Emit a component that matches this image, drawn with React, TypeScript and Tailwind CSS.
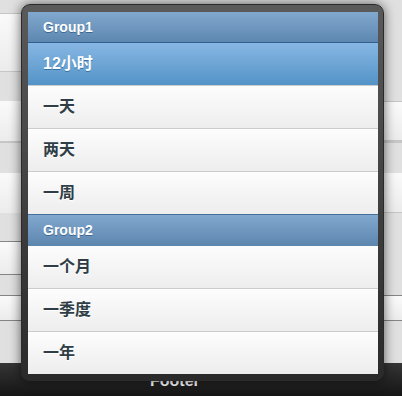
import React from 'react';

type Band = { h: number; kind: 'gray' | 'white' | 'line' | 'dark' };

// page behind the popup (only the edges show)
const leftBands: Band[] = [
  { h: 13, kind: 'gray' },
  { h: 1, kind: 'line' },
  { h: 57, kind: 'white' },
  { h: 1, kind: 'line' },
  { h: 29, kind: 'gray' },
  { h: 40, kind: 'white' },
  { h: 2, kind: 'line' },
  { h: 30, kind: 'gray' },
  { h: 40, kind: 'white' },
  { h: 28, kind: 'gray' },
  { h: 1, kind: 'dark' },
  { h: 32, kind: 'white' },
  { h: 1, kind: 'dark' },
  { h: 20, kind: 'gray' },
  { h: 1, kind: 'dark' },
  { h: 24, kind: 'white' },
  { h: 1, kind: 'dark' },
  { h: 42, kind: 'gray' },
];

const rightBands: Band[] = [
  { h: 101, kind: 'gray' },
  { h: 1, kind: 'line' },
  { h: 38, kind: 'white' },
  { h: 3, kind: 'line' },
  { h: 30, kind: 'gray' },
  { h: 39, kind: 'white' },
  { h: 1, kind: 'line' },
  { h: 82, kind: 'gray' },
  { h: 1, kind: 'dark' },
  { h: 24, kind: 'white' },
  { h: 1, kind: 'dark' },
  { h: 42, kind: 'gray' },
];

const bandClass = {
  gray: 'bg-[#e0e0e0]',
  white: 'bg-gradient-to-b from-[#fafafa] to-[#ececec]',
  line: 'bg-[#c6c6c6]',
  dark: 'bg-[#858585]',
};

const Column: React.FC<{ bands: Band[] }> = ({ bands }) => (
  <div className="flex flex-col">
    {bands.map((b, i) => (
      <div key={i} className={bandClass[b.kind]} style={{ height: b.h }} />
    ))}
  </div>
);

const groups = [
  { title: 'Group1', items: ['12小时', '一天', '两天', '一周'] },
  { title: 'Group2', items: ['一个月', '一季度', '一年'] },
];

const Divider: React.FC<{ label: string; first?: boolean }> = ({ label, first }) => (
  <li
    className={`flex items-center h-[30px] box-content pl-[15px] bg-gradient-to-b from-[#81a8ce] to-[#5e87b0] text-white text-[14px] font-bold [text-shadow:0_1px_0_#3e6790] ${
      first ? '' : 'border-t border-[#456f9a]'
    }`}
  >
    {label}
  </li>
);

const Item: React.FC<{ label: string; active?: boolean; afterDivider?: boolean }> = ({
  label,
  active,
  afterDivider,
}) => (
  <li
    className={`flex items-center h-[42px] box-content pl-[15px] border-t text-[16px] font-bold ${
      active
        ? 'bg-gradient-to-b from-[#87b7e3] to-[#5393c7] border-[#2f5f8c] text-white [text-shadow:0_1px_0_#3373a5]'
        : `bg-gradient-to-b from-[#fdfdfd] to-[#ededed] text-[#2f3e46] [text-shadow:0_1px_0_#fff] ${
            afterDivider ? 'border-[#5e87b0]' : 'border-[#cccccc]'
          }`
    }`}
  >
    {label}
  </li>
);

export default function App() {
  return (
    <div className="relative w-full h-[396px] overflow-hidden bg-[#e0e0e0] font-['Liberation_Sans','Noto_Sans_CJK_SC',sans-serif]">
      <div className="grid grid-cols-2">
        <Column bands={leftBands} />
        <Column bands={rightBands} />
      </div>
      <footer className="h-[33px] pt-[8px] pl-[150px] bg-gradient-to-b from-[#363636] to-[#151515] text-white text-[16px] font-bold leading-[20px] [text-shadow:0_-1px_0_#000]">
        Footer
      </footer>

      {/* select menu popup */}
      <div className="absolute left-[21px] top-[4px] w-[363px] rounded-[9px] border border-[#2a2a2a] bg-gradient-to-b from-[#5a5a5a] to-[#2a2a2a] pt-[7px] pl-[6px] pr-[5px] pb-[6px] shadow-[0_0_12px_rgba(0,0,0,0.6)]">
        <ul className="flex flex-col overflow-hidden">
          {groups.map((g, gi) => (
            <React.Fragment key={g.title}>
              <Divider label={g.title} first={gi === 0} />
              {g.items.map((it, ii) => (
                <Item
                  key={it}
                  label={it}
                  active={gi === 0 && ii === 0}
                  afterDivider={ii === 0}
                />
              ))}
            </React.Fragment>
          ))}
        </ul>
      </div>
    </div>
  );
}
